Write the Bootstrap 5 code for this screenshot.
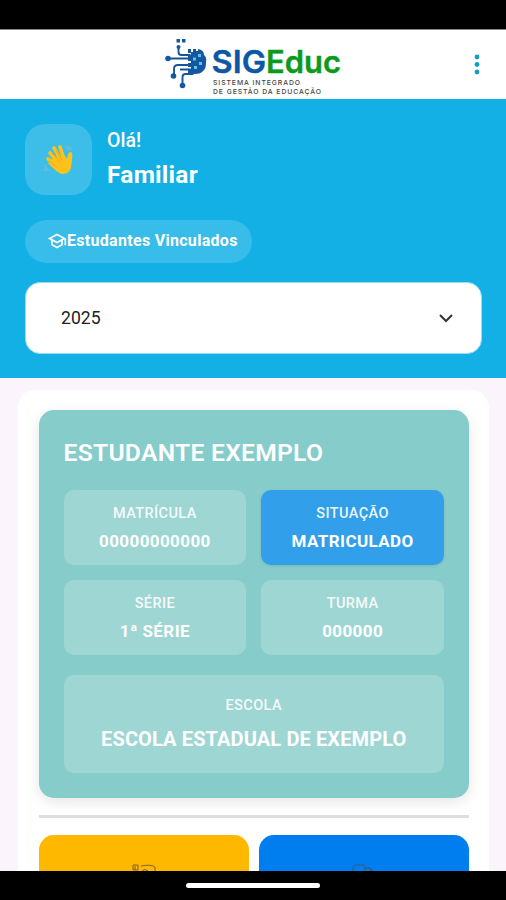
<!DOCTYPE html>
<html lang="pt-BR">
<head>
<meta charset="utf-8">
<meta name="viewport" content="width=device-width, initial-scale=1">
<title>SIGEduc</title>
<link rel="stylesheet" href="https://cdn.jsdelivr.net/npm/bootstrap@5.3.0/dist/css/bootstrap.min.css">
<style>
body{font-family:Roboto,"Liberation Sans",sans-serif;background:#fbf4fc;height:900px;overflow:hidden;color:#fff;line-height:1.2}
svg{display:block}
.sysbar{height:30px;background:#000;border-bottom:1px solid #888;flex:none}
.sysnav{height:29px;background:#000;flex:none;padding-top:12px}
.homebar{width:134px;height:5px;border-radius:3px;background:#fff}
.topbar{height:69px;flex:none;padding:0 24px 0 160px;--bs-navbar-padding-y:0;background:#fff}
.hero{height:279px;flex:none;background:#12b0e5;padding:25px 24px 0 25px}
.avatar{width:67px;height:71px;border-radius:20px;background:rgba(255,255,255,.18)}
.greeting{padding:5px 0 0 15px}
.hello{font-size:19.5px;line-height:24px;font-weight:500}
.who{font-size:24.5px;line-height:30px;font-weight:700;margin-top:7px;letter-spacing:.25px}
.pill{width:227px;height:43px;margin-top:24.5px;background:rgba(255,255,255,.16);font-size:16px;font-weight:700;padding-left:22px;white-space:nowrap;letter-spacing:.3px}
.year,.year:focus{height:72px;margin-top:19px;border:1px solid #9bdcf5;border-radius:15px;background:#fff;color:#222;font-size:17.6px;padding:1px 27px 0 35px}
.sheet{margin:12px 17px 0 18px;padding:20px 20.5px 0;border-radius:18px 18px 0 0;background:#fff;overflow:hidden;flex:1}
.student{height:388px;background:#86ccca;border-radius:15px;padding:25px 24.5px 0 25px;box-shadow:0 4px 14px rgba(0,0,0,.1)}
.student-name{font-size:24.6px;line-height:35px;font-weight:600;height:55px;margin:0;letter-spacing:.3px;white-space:nowrap}
.tiles{display:grid;grid-template-columns:1fr 1fr;gap:15px}
.tile{height:75px;border-radius:10px;background:rgba(255,255,255,.2);padding-top:14px}
.tile-on{background:#319fe9;box-shadow:0 1px 3px rgba(0,0,0,.1)}
.lbl{font-size:14.5px;line-height:20px;font-weight:500;letter-spacing:.4px;opacity:.9}
.val{font-size:17px;line-height:22px;font-weight:700;margin-top:6px;letter-spacing:.4px;white-space:nowrap}
.school{height:98px;margin-top:20px;padding-top:21px}
.school .val{font-size:20px;line-height:26px;margin-top:10px;letter-spacing:.12px}
.divider{height:3px;background:#dddedf;margin:17px 0}
.actions{display:grid;grid-template-columns:210px 1fr;gap:10px}
.action{height:110px;border-radius:15px;padding-top:29px}
.gold{background:#ffb800}.azure{background:#007def}
</style>
</head>
<body class="d-flex flex-column">
<div class="sysbar"></div>
<nav class="navbar topbar d-flex justify-content-between align-items-start">
<svg width="190" height="69" viewBox="160 30 190 69" role="img" aria-label="SIGEduc">
<g fill="none" stroke="#17559b" stroke-width="1.900"><path d="M178.500 47v5q0 3 3 3h9M168 58.500h24M174 76v-7q0-4 4-4h14M180 69.500h12M182.500 84v-7q0-3 3-3h8"/></g>
<g fill="#1458a0"><rect x="176.500" y="39" width="3.500" height="3.500"/><rect x="182" y="39" width="3.500" height="3.500"/><circle cx="178.500" cy="47" r="2"/><circle cx="168" cy="58.500" r="2.800"/><circle cx="173.500" cy="76" r="2.800"/><circle cx="182.500" cy="85.500" r="2.800"/>
<path d="M188 49h3v3h2v-3h3v2h2v-2q6 1 6 6 3 2 2 8 0 6-3 8-2 3-8 3h-7v-5h3v-2h-3v-4h3v-2h-3v-6h3v-2h-3z"/></g>
<g fill="#5fc3ea"><rect x="193" y="57.500" width="3" height="3"/><rect x="198" y="54" width="3" height="3"/><rect x="199" y="62" width="3" height="3"/><rect x="194" y="66" width="3" height="3"/></g>
<g font-family="Inter,sans-serif" font-weight="600" font-size="31"><text x="211.500" y="72.800" textLength="54.500" lengthAdjust="spacingAndGlyphs" fill="#0d57a8" stroke="#0d57a8" stroke-width=".4">SIG</text><text x="266" y="72.800" textLength="75" lengthAdjust="spacingAndGlyphs" fill="#0c9a1c" stroke="#0c9a1c" stroke-width=".4">Educ</text></g>
<g font-family="Inter,sans-serif" font-weight="500" font-size="6.800" fill="#444"><text x="213" y="84.500" textLength="87">SISTEMA INTEGRADO</text><text x="213" y="93.500" textLength="108">DE GESTÃO DA EDUCAÇÃO</text></g>
</svg>
<svg width="10" height="69" viewBox="472 30 10 69" fill="#189bc5"><circle cx="477" cy="57" r="2.400"/><circle cx="477" cy="64.500" r="2.400"/><circle cx="477" cy="72" r="2.400"/></svg>
</nav>
<header class="hero">
<div class="d-flex">
<div class="avatar d-flex align-items-center justify-content-center">
<svg width="34" height="34" viewBox="0 0 34 34"><g stroke="#fcc21b" stroke-width="3.600" stroke-linecap="round"><path d="M16 19 8 10M19 17 12 5M22 16 18 4M15 22 6 16"/></g><path d="M12 14 22 12 25 16Q26 8 29 9 31 10 30 17L29 25Q27 31 20 31 15 30 6 20Z" fill="#fcc21b"/><path d="m10 10 8 9m-4-12 6 10M7 18l8 6" stroke="#e5a51a" stroke-width=".8" fill="none"/><path d="M23 3q3 1 4 5M26 3q3 2 3 4M3 22q1 4 4 5M2 26q2 2 3 2" stroke="#79b9d3" stroke-width="1.300" fill="none"/></svg>
</div>
<div class="greeting"><div class="hello">Olá!</div><div class="who">Familiar</div></div>
</div>
<div class="pill rounded-pill d-flex align-items-center">
<svg width="20" height="20" viewBox="0 0 24 24" fill="#fff"><path d="M12 3 1 9l4 2.180v6L12 21l7-3.820v-6l2-1.090V17h2V9L12 3zm6.820 6L12 12.720 5.180 9 12 5.280 18.820 9zM17 15.990l-5 2.730-5-2.730v-3.720L12 15l5-2.730v3.720z"/></svg><span>Estudantes Vinculados</span></div>
<button class="year btn w-100 d-flex align-items-center justify-content-between" type="button"><span>2025</span><svg width="16" height="10" viewBox="0 0 16 10" fill="none" stroke="#333" stroke-width="2"><path d="m2 2 6 6 6-6"/></svg></button>
</header>
<main class="sheet">
<section class="student">
<h1 class="student-name">ESTUDANTE EXEMPLO</h1>
<div class="tiles text-center">
<div class="tile"><div class="lbl">MATRÍCULA</div><div class="val">00000000000</div></div>
<div class="tile tile-on"><div class="lbl">SITUAÇÃO</div><div class="val">MATRICULADO</div></div>
<div class="tile"><div class="lbl">SÉRIE</div><div class="val">1ª SÉRIE</div></div>
<div class="tile"><div class="lbl">TURMA</div><div class="val">000000</div></div>
</div>
<div class="tile school text-center"><div class="lbl">ESCOLA</div><div class="val">ESCOLA ESTADUAL DE EXEMPLO</div></div>
</section>
<div class="divider"></div>
<div class="actions">
<div class="action gold d-flex justify-content-center"><svg width="24" height="24" fill="none" stroke="#806020"><path d="M1 1h5v5H1zM9 2q10-2 14 1v20H1V8M3 2v4M10 7q3-3 6 0"/></svg></div>
<div class="action azure d-flex justify-content-center"><svg width="24" height="24" fill="none" stroke="#3a5a82"><path d="M1 23V4q0-3 3-3h8l1 4v18M13 4h6v19M16 4l7 4v15"/></svg></div>
</div>
</main>
<footer class="sysnav d-flex justify-content-center"><div class="homebar"></div></footer>
<script src="https://cdn.jsdelivr.net/npm/bootstrap@5.3.0/dist/js/bootstrap.bundle.min.js"></script>
</body>
</html>
